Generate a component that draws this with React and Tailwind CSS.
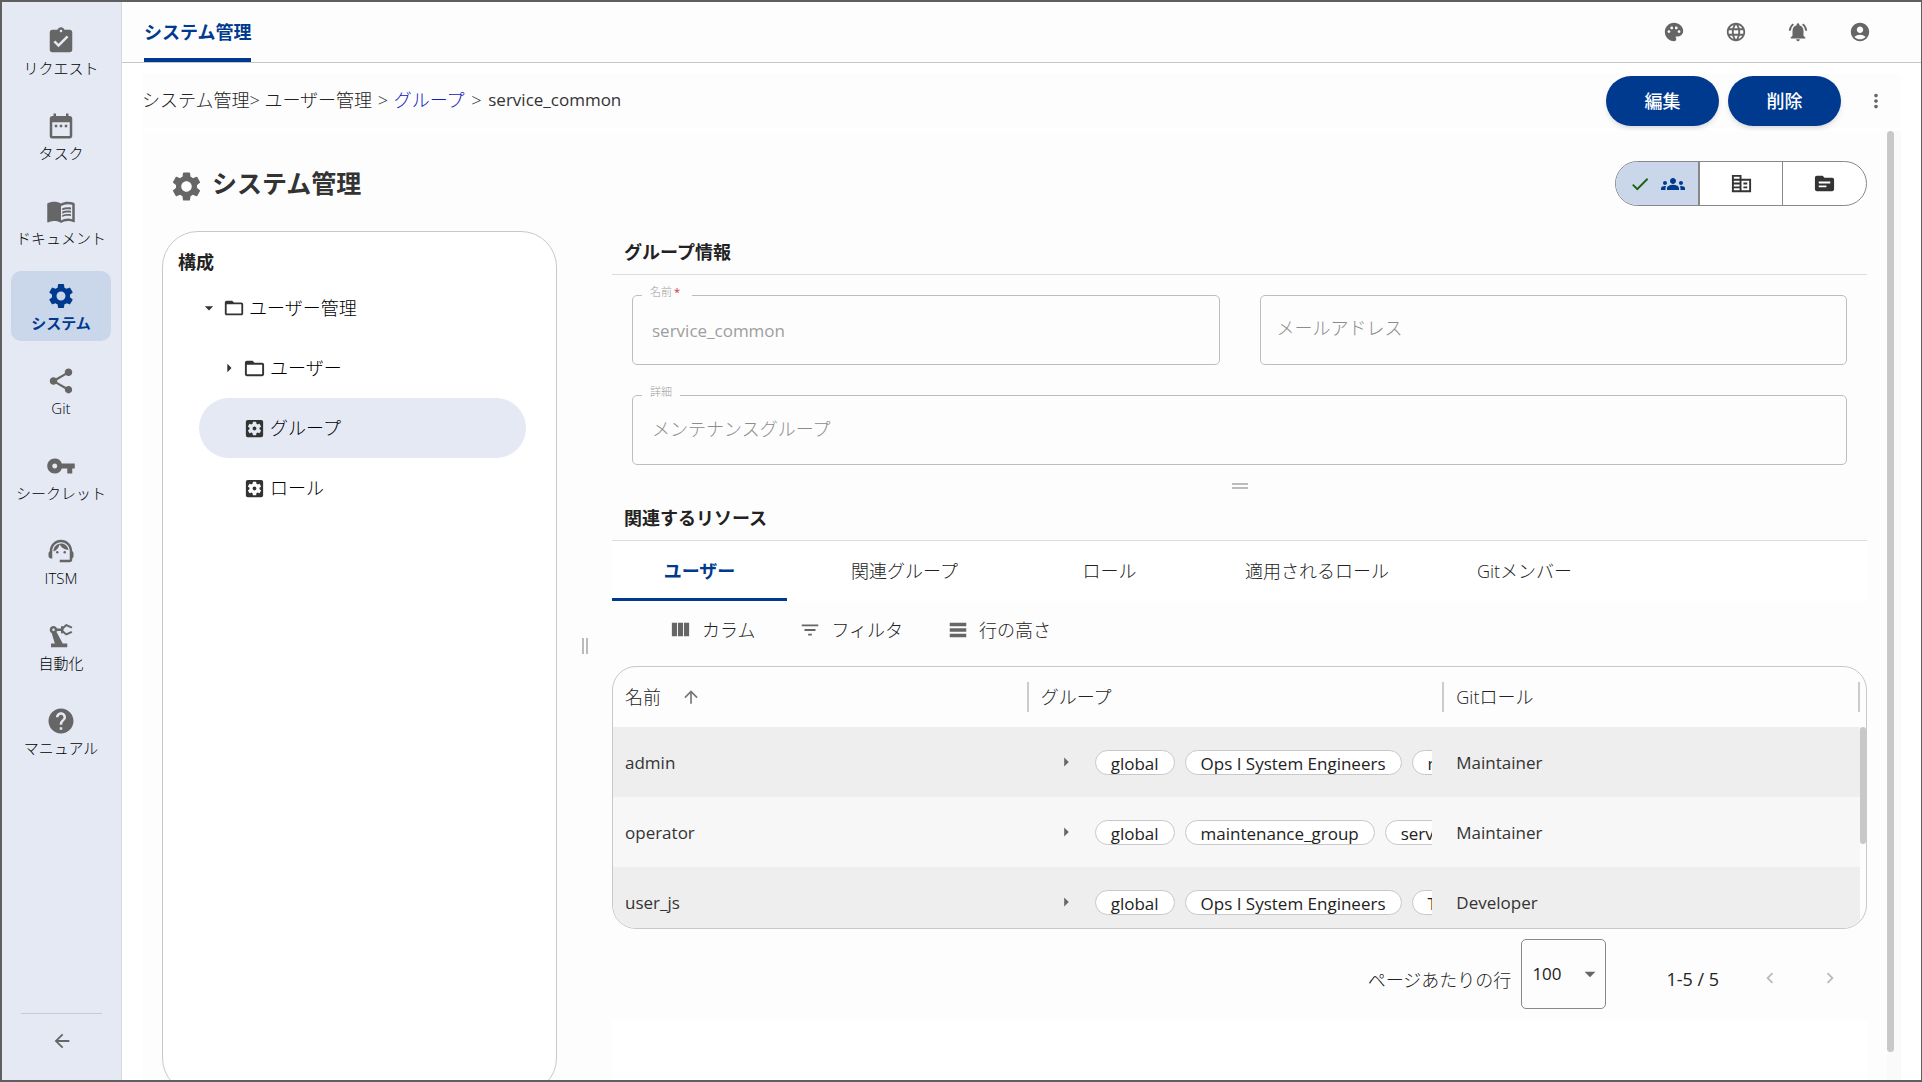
import {
  MdAssignmentTurnedIn, MdDateRange, MdMenuBook, MdSettings, MdShare, MdVpnKey,
  MdPrecisionManufacturing, MdHelp, MdArrowBack, MdPalette, MdLanguage,
  MdNotificationsActive, MdAccountCircle, MdMoreVert, MdCheck, MdGroups,
  MdCorporateFare, MdTopic, MdArrowDropDown, MdArrowRight, MdFolderOpen,
  MdSettingsApplications, MdFilterList, MdTableRows, MdArrowUpward,
  MdChevronLeft, MdChevronRight,
} from 'react-icons/md';

function AgentIcon({ size }) {
  return (
    <svg viewBox="0 0 24 24" width={size} height={size} fill="currentColor" aria-hidden="true">
      <path d="M21 12.22C21 6.73 16.74 3 12 3c-4.69 0-9 3.65-9 9.28-.6.34-1 .98-1 1.72v2c0 1.1.9 2 2 2h1v-6.1c0-3.87 3.13-7 7-7s7 3.13 7 7V19h-8v2h8c1.1 0 2-.9 2-2v-1.22c.59-.31 1-.92 1-1.64v-2.3c0-.7-.41-1.31-1-1.62z" />
      <circle cx="9" cy="13" r="1" />
      <circle cx="15" cy="13" r="1" />
      <path d="M18 11.03C17.52 8.18 15.04 6 12.05 6c-3.03 0-6.29 2.51-6.03 6.45 2.47-1.01 4.33-3.21 4.86-5.89 1.31 2.63 4 4.44 7.12 4.47z" />
    </svg>
  );
}

function ColumnsIcon({ size }) {
  return (
    <svg viewBox="0 0 24 24" width={size} height={size} fill="currentColor" aria-hidden="true">
      <path d="M14.67 5v14H9.33V5h5.34zm1 14H21V5h-5.33v14zm-7.34 0V5H3v14h5.33z" />
    </svg>
  );
}

const navItems = [
  { label: 'リクエスト', icon: MdAssignmentTurnedIn },
  { label: 'タスク', icon: MdDateRange },
  { label: 'ドキュメント', icon: MdMenuBook },
  { label: 'システム', icon: MdSettings, active: true },
  { label: 'Git', icon: MdShare },
  { label: 'シークレット', icon: MdVpnKey },
  { label: 'ITSM', icon: AgentIcon },
  { label: '自動化', icon: MdPrecisionManufacturing },
  { label: 'マニュアル', icon: MdHelp },
];

const headerActions = [
  { label: 'テーマ', icon: MdPalette },
  { label: '言語', icon: MdLanguage },
  { label: '通知', icon: MdNotificationsActive },
  { label: 'アカウント', icon: MdAccountCircle },
];

const tabs = ['ユーザー', '関連グループ', 'ロール', '適用されるロール', 'Gitメンバー'];

const rows = [
  { name: 'admin', groups: ['global', 'Ops I System Engineers', 'maintenance_group'], role: 'Maintainer' },
  { name: 'operator', groups: ['global', 'maintenance_group', 'service_common'], role: 'Maintainer' },
  { name: 'user_js', groups: ['global', 'Ops I System Engineers', 'Trainees'], role: 'Developer' },
];

function Sidebar() {
  return (
    <nav className="flex w-[120px] shrink-0 flex-col border-r border-[#d8d8dc] bg-[#e4e9f4] pt-3.5 pl-[9px]">
      <ul className="flex flex-col gap-[15px]">
        {navItems.map(({ label, icon: Icon, active }) => (
          <li key={label}>
            <button
              className={
                active
                  ? 'flex h-[70px] w-[100px] flex-col items-center rounded-[10px] bg-[#cad6ea] pt-2.5 font-bold text-[#003a8f]'
                  : 'flex h-[70px] w-[100px] flex-col items-center rounded-[10px] pt-2.5 text-black'
              }
            >
              <span className={active ? 'text-[#003a8f]' : 'text-[#666]'}>
                <Icon size={30} />
              </span>
              <span className="text-[15px] leading-6 whitespace-nowrap">{label}</span>
            </button>
          </li>
        ))}
      </ul>
      <div className="mt-auto ml-2.5 flex w-[81px] flex-col items-center border-t border-[#c6cad4] pt-4 pb-7">
        <button aria-label="戻る" className="text-[#666]"><MdArrowBack size={22} /></button>
      </div>
    </nav>
  );
}

function Header() {
  return (
    <header className="flex h-[61px] shrink-0 items-stretch justify-between border-b border-[#c8c8c8] bg-[#fdfdfd] pr-[50px] pl-[22px]">
      <a href="#system" className="flex items-center rounded-t border-b-4 border-[#003a8f] pt-1 text-lg font-bold text-[#003a8f]">
        システム管理
      </a>
      <div className="flex items-center gap-10 text-[#666]">
        {headerActions.map(({ label, icon: Icon }) => (
          <button key={label} aria-label={label} className="w-[22px]"><Icon size={22} /></button>
        ))}
      </div>
    </header>
  );
}

function TreePanel() {
  return (
    <section className="-mb-3.5 flex w-[395px] shrink-0 flex-col rounded-[36px] border border-[#c8c8c8] bg-white pt-[15px] pr-[30px] pb-px pl-9">
      <h2 className="-ml-[21px] text-lg leading-[30px] font-bold">構成</h2>
      <ul className="pt-px text-lg text-black">
        <li>
          <button className="flex h-[60px] w-full items-center">
            <MdArrowDropDown size={20} className="text-[#333]" />
            <MdFolderOpen size={22} className="mr-1 ml-1 text-[#333]" />
            ユーザー管理
          </button>
          <ul>
            <li>
              <button className="flex h-[60px] w-full items-center rounded-full pl-5">
                <MdArrowRight size={20} className="text-[#333]" />
                <MdFolderOpen size={23} className="mr-1 ml-1 text-[#333]" />
                ユーザー
              </button>
            </li>
            <li>
              <button className="flex h-[60px] w-full items-center rounded-full bg-[#e4e9f4] pl-11">
                <MdSettingsApplications size={23} className="mr-1 text-[#333]" />
                グループ
              </button>
            </li>
            <li>
              <button className="flex h-[60px] w-full items-center rounded-full pl-11">
                <MdSettingsApplications size={23} className="mr-1 text-[#333]" />
                ロール
              </button>
            </li>
          </ul>
        </li>
      </ul>
    </section>
  );
}

function Field({ id, label, value, required, wide }) {
  return (
    <div className={wide ? 'relative col-span-2' : 'relative'}>
      <label htmlFor={id} className="absolute -top-[11px] left-2.5 bg-[#fdfdfd] px-2 text-[11px] leading-4 text-[#a0a0a0]">
        {label}
        {required && <span className="mr-1 ml-0.5 font-normal text-[#d32f2f]">*</span>}
      </label>
      <input
        id={id}
        disabled
        defaultValue={value}
        className={
          wide
            ? 'h-[70px] w-full rounded-[5px] border border-[#bdbdbd] bg-transparent px-[19px] pb-1 text-lg text-[#8c8c8c]'
            : 'h-[70px] w-full rounded-[5px] border border-[#bdbdbd] bg-transparent px-[19px] text-[17px] font-normal text-[#9e9e9e]'
        }
      />
    </div>
  );
}

function GroupInfo() {
  return (
    <section>
      <h2 className="border-b border-[#ddd] px-3 pt-1.5 pb-[7px] text-lg leading-[30px] font-bold">グループ情報</h2>
      <form className="grid grid-cols-2 gap-x-10 gap-y-[30px] px-5 pt-5">
        <Field id="name" label="名前" value="service_common" required />
        <div>
          <input aria-label="メールアドレス" disabled placeholder="メールアドレス" className="h-[70px] w-full rounded-[5px] border border-[#bdbdbd] bg-transparent px-4 pb-1 text-lg placeholder:text-[#8c8c8c]" />
        </div>
        <Field id="detail" label="詳細" value="メンテナンスグループ" wide />
      </form>
    </section>
  );
}

function ResourceTable() {
  return (
    <div className="flex h-[263px] flex-col overflow-hidden rounded-3xl border border-[#c8c8c8] bg-[#fdfdfd]">
      <div className="flex">
        <table className="w-full table-fixed border-collapse text-left text-[17px]">
          <thead>
            <tr className="h-[60px] text-lg">
              <th scope="col" className="p-0 font-light">
                <div className="flex h-[30px] items-center border-r-2 border-[#ccc] pl-3">
                  名前
                  <MdArrowUpward size={20} className="ml-5 text-[#777]" />
                </div>
              </th>
              <th scope="col" className="p-0 font-light">
                <div className="flex h-[30px] items-center border-r-2 border-[#ccc] pl-3">グループ</div>
              </th>
              <th scope="col" className="p-0 font-light">
                <div className="flex h-[30px] items-center border-r-2 border-[#ccc] pl-3">Gitロール</div>
              </th>
            </tr>
          </thead>
          <tbody className="font-normal text-[#333]">
            {rows.map((row) => (
              <tr key={row.name} className="h-[70px] odd:bg-[#eee] even:bg-[#f7f7f7]">
                <td className="px-3 pt-0.5 pb-0">{row.name}</td>
                <td className="px-3 py-0">
                  <div className="flex items-center gap-2.5 overflow-hidden pl-3.5">
                    <button aria-label={`${row.name}のグループを展開`} className="mr-2 text-[#666]">
                      <MdArrowRight size={22} />
                    </button>
                    {row.groups.map((group) => (
                      <span key={group} className="h-[25px] shrink-0 rounded-full border border-[#c8c8c8] bg-white px-[15px] leading-[25px] text-[#222]">
                        {group}
                      </span>
                    ))}
                  </div>
                </td>
                <td className="px-3 pt-0.5 pb-0">{row.role}</td>
              </tr>
            ))}
          </tbody>
        </table>
        <div className="w-1.5 shrink-0 pt-[60px]">
          <div className="h-[117px] rounded-[3px] bg-[#c8c8c8]" />
        </div>
      </div>
    </div>
  );
}

function Pagination() {
  return (
    <div className="flex h-[90px] items-center justify-end pr-[26px] text-lg">
      <label htmlFor="page-size" className="mt-3">ページあたりの行</label>
      <div className="relative ml-2.5">
        <select id="page-size" defaultValue="100" className="h-[70px] w-[85px] appearance-none rounded-[5px] border border-[#888] bg-transparent px-2.5 text-[17px] font-normal">
          <option>100</option>
        </select>
        <MdArrowDropDown size={26} className="pointer-events-none absolute top-[22px] right-[3px] text-[#666]" />
      </div>
      <span className="mt-2.5 ml-[60px] font-normal">1-5 / 5</span>
      <div className="mt-2 ml-10 flex gap-[38px] text-[#bbb]">
        <button aria-label="前のページ"><MdChevronLeft size={22} /></button>
        <button aria-label="次のページ"><MdChevronRight size={22} /></button>
      </div>
    </div>
  );
}

function Resources() {
  return (
    <section className="flex grow flex-col">
      <h2 className="border-b border-[#ddd] px-3 pb-[7px] text-lg leading-[30px] font-bold">関連するリソース</h2>
      <div role="tablist" className="flex gap-[30px] bg-white">
        {tabs.map((tab, i) => (
          <button
            key={tab}
            role="tab"
            aria-selected={i === 0}
            className={
              i === 0
                ? 'h-[60px] min-w-[175px] border-b-3 border-[#003a8f] px-[18px] pt-[3px] text-lg font-bold text-[#003a8f]'
                : 'h-[60px] min-w-[175px] border-b-3 border-transparent px-[18px] pt-[3px] text-lg'
            }
          >
            {tab}
          </button>
        ))}
      </div>
      <div className="flex h-[65px] items-center gap-11 pb-2 pl-[57px] text-lg">
        <button className="flex items-center gap-2.5">
          <span className="text-[#666]"><ColumnsIcon size={23} /></span>カラム
        </button>
        <button className="flex items-center gap-2.5">
          <MdFilterList size={22} className="text-[#666]" />フィルタ
        </button>
        <button className="flex items-center gap-2.5">
          <MdTableRows size={22} className="text-[#666]" />行の高さ
        </button>
      </div>
      <ResourceTable />
      <Pagination />
      <div className="grow bg-white" />
    </section>
  );
}

export default function App() {
  return (
    <div className="flex h-screen overflow-hidden border-2 border-r border-[#5f5f5f] bg-white font-['Open_Sans','Noto_Sans_CJK_JP',sans-serif] font-light text-[#222]">
      <Sidebar />
      <div className="flex min-w-0 grow flex-col">
        <Header />
        <div className="mt-[11px] mr-5 ml-5 flex h-[54px] shrink-0 items-center justify-between bg-[#fdfdfd]">
          <nav aria-label="パンくずリスト" className="flex items-center pb-0.5 text-lg whitespace-pre">
            <span>{'システム管理> ユーザー管理'}</span>
            <span className="px-px">{' > '}</span>
            <a href="#groups" className="text-[#1020c0]">グループ</a>
            <span className="px-0.5">{' > '}</span>
            <span className="text-[17px] font-normal text-[#333]">service_common</span>
          </nav>
          <div className="flex items-center gap-[9px] pr-3.5">
            <button className="h-[50px] w-[113px] rounded-full bg-[#003a8f] text-lg font-medium text-white shadow-md">編集</button>
            <button className="h-[50px] w-[113px] rounded-full bg-[#003a8f] text-lg font-medium text-white shadow-md">削除</button>
            <button aria-label="その他" className="ml-[15px] text-[#666]"><MdMoreVert size={22} /></button>
          </div>
        </div>
        <div className="mt-[3px] mr-5 ml-5 flex min-h-0 grow">
          <main className="flex min-w-0 grow flex-col bg-[#fdfdfd] pr-5 pl-5">
            <div className="flex items-start justify-between pt-[30px]">
              <h1 className="flex items-center pl-[7px] text-[25px] leading-[42px] font-bold text-[#333]">
                <MdSettings size={35} className="mt-2 mr-2 text-[#666]" />
                システム管理
              </h1>
              <div role="group" aria-label="表示切替" className="flex h-[45px] overflow-hidden rounded-full border border-[#888] bg-white text-[#333]">
                <button aria-label="グループ" aria-pressed="true" className="flex w-[84px] items-center justify-center gap-2.5 border-r-2 border-[#888] bg-[#cad6ea]">
                  <MdCheck size={22} className="text-[#1b6310]" />
                  <MdGroups size={24} className="text-[#003a8f]" />
                </button>
                <button aria-label="組織" className="flex w-[83px] items-center justify-center border-r border-[#888]"><MdCorporateFare size={23} /></button>
                <button aria-label="トピック" className="flex w-[83px] items-center justify-center"><MdTopic size={23} /></button>
              </div>
            </div>
            <div className="mt-[25px] flex min-h-0 grow">
              <TreePanel />
              <div className="flex w-[55px] shrink-0 items-center justify-center pb-5">
                <div className="flex h-4 w-1.5 justify-between">
                  <div className="w-0.5 bg-[#bbb]" />
                  <div className="w-0.5 bg-[#bbb]" />
                </div>
              </div>
              <div className="flex min-w-0 grow flex-col">
                <GroupInfo />
                <div className="flex h-[38px] items-center justify-center pt-1">
                  <div className="flex h-1.5 w-4 flex-col justify-between">
                    <div className="h-0.5 bg-[#bbb]" />
                    <div className="h-0.5 bg-[#bbb]" />
                  </div>
                </div>
                <Resources />
              </div>
            </div>
          </main>
          <div className="w-[14px] shrink-0 bg-[#fafafa] pb-7">
            <div className="h-full w-[7px] rounded-full bg-[#c8c8c8]" />
          </div>
        </div>
      </div>
    </div>
  );
}
